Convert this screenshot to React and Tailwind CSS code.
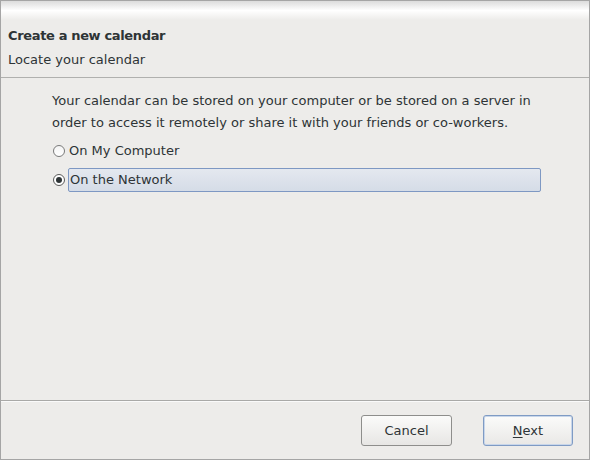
export default function App() {
  return (
    <div
      className="w-[590px] h-[460px] flex flex-col bg-[#edecea] border border-[#a5a5a5] text-[13px] text-[#2e3436] overflow-hidden"
      style={{ fontFamily: '"DejaVu Sans", sans-serif' }}
    >
      <div className="h-[19px] shrink-0 bg-gradient-to-b from-[#dcdcdc] via-[#ffffff] to-[#edecea]" />
      <div className="px-[7px] flex flex-col">
        <div className="font-bold leading-[20px] pt-[6px] tracking-[-0.35px]">Create a new calendar</div>
        <div className="leading-[20px] pt-[4px]">Locate your calendar</div>
      </div>
      <div className="mt-[7px] border-t border-[#b0b0ae] h-px" />
      <div className="flex-1 pl-[51px] pr-[48px] pt-[12px]">
        <p className="leading-[22px]">
          Your calendar can be stored on your computer or be stored on a server in order to access it
          remotely or share it with your friends or co-workers.
        </p>
        <div className="mt-[5px] flex flex-col gap-[5px]">
          <label className="flex items-center h-[24px]">
            <span className="w-[12px] h-[12px] rounded-full border border-[#7a7a7a] bg-gradient-to-b from-[#f4f4f4] to-[#ffffff] mr-[4px] ml-[1px]" />
            <span>On My Computer</span>
          </label>
          <label className="flex items-center h-[24px]">
            <span className="w-[12px] h-[12px] rounded-full border border-[#5a5a5a] bg-white mr-[3px] ml-[1px] flex items-center justify-center">
              <span className="w-[6px] h-[6px] rounded-full bg-[#2e3436]" />
            </span>
            <span className="flex-1 h-[24px] flex items-center px-[1px] rounded-[2px] border border-[#7e98c3] bg-gradient-to-b from-[#e4e8ef] to-[#d5dce7]">
              On the Network
            </span>
          </label>
        </div>
      </div>
      <div className="border-t border-[#a9a9a7] shadow-[0_1px_0_#fafafa]" />
      <div className="h-[58px] shrink-0 flex items-center justify-end gap-[31px] pr-[16px] pt-[1px]">
        <button className="w-[91px] h-[31px] rounded-[3px] border border-[#8e8e8c] bg-gradient-to-b from-[#fbfbfa] to-[#e7e6e4] text-[#2e3436]">
          Cancel
        </button>
        <button className="w-[90px] h-[31px] rounded-[3px] border border-[#7f9bc4] bg-gradient-to-b from-[#fbfbfa] to-[#e9e8e6] text-[#2e3436] shadow-[inset_0_0_0_1px_#c8d6ea]">
          <span className="underline underline-offset-2">N</span>ext
        </button>
      </div>
    </div>
  );
}
